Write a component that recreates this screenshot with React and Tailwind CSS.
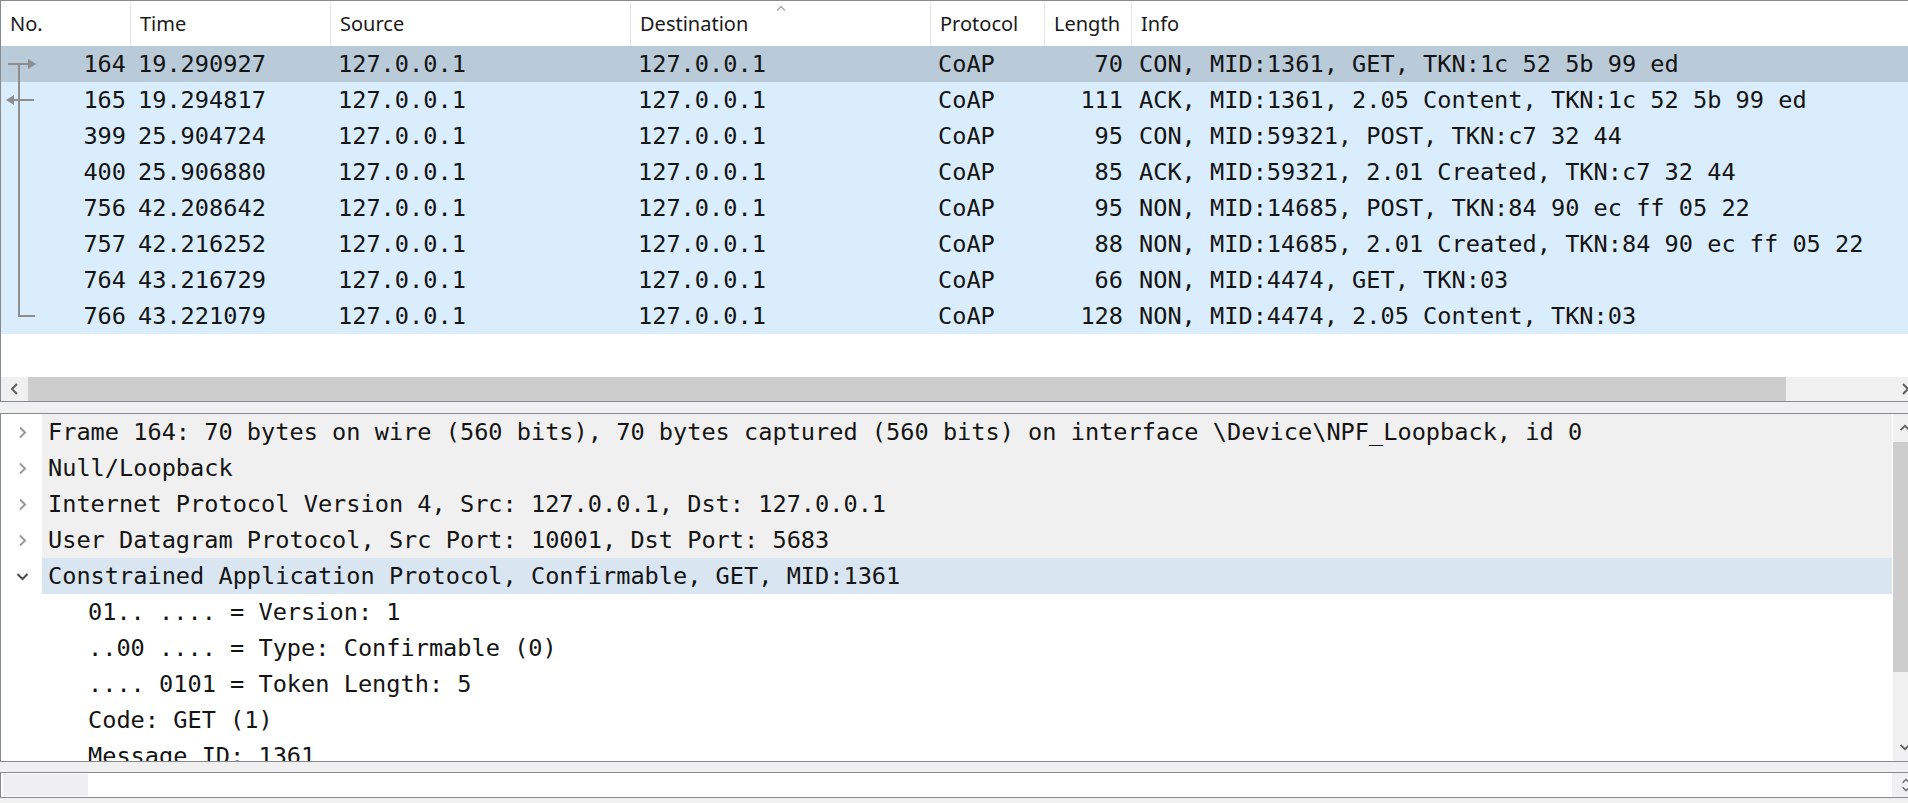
import React from 'react';

const packets = [
  { no: 164, time: '19.290927', src: '127.0.0.1', dst: '127.0.0.1', proto: 'CoAP', len: 70, info: 'CON, MID:1361, GET, TKN:1c 52 5b 99 ed' },
  { no: 165, time: '19.294817', src: '127.0.0.1', dst: '127.0.0.1', proto: 'CoAP', len: 111, info: 'ACK, MID:1361, 2.05 Content, TKN:1c 52 5b 99 ed' },
  { no: 399, time: '25.904724', src: '127.0.0.1', dst: '127.0.0.1', proto: 'CoAP', len: 95, info: 'CON, MID:59321, POST, TKN:c7 32 44' },
  { no: 400, time: '25.906880', src: '127.0.0.1', dst: '127.0.0.1', proto: 'CoAP', len: 85, info: 'ACK, MID:59321, 2.01 Created, TKN:c7 32 44' },
  { no: 756, time: '42.208642', src: '127.0.0.1', dst: '127.0.0.1', proto: 'CoAP', len: 95, info: 'NON, MID:14685, POST, TKN:84 90 ec ff 05 22' },
  { no: 757, time: '42.216252', src: '127.0.0.1', dst: '127.0.0.1', proto: 'CoAP', len: 88, info: 'NON, MID:14685, 2.01 Created, TKN:84 90 ec ff 05 22' },
  { no: 764, time: '43.216729', src: '127.0.0.1', dst: '127.0.0.1', proto: 'CoAP', len: 66, info: 'NON, MID:4474, GET, TKN:03' },
  { no: 766, time: '43.221079', src: '127.0.0.1', dst: '127.0.0.1', proto: 'CoAP', len: 128, info: 'NON, MID:4474, 2.05 Content, TKN:03' },
];

const tree = [
  { text: 'Frame 164: 70 bytes on wire (560 bits), 70 bytes captured (560 bits) on interface \\Device\\NPF_Loopback, id 0', kind: 'closed' },
  { text: 'Null/Loopback', kind: 'closed' },
  { text: 'Internet Protocol Version 4, Src: 127.0.0.1, Dst: 127.0.0.1', kind: 'closed' },
  { text: 'User Datagram Protocol, Src Port: 10001, Dst Port: 5683', kind: 'closed' },
  { text: 'Constrained Application Protocol, Confirmable, GET, MID:1361', kind: 'open' },
  { text: '01.. .... = Version: 1', kind: 'child' },
  { text: '..00 .... = Type: Confirmable (0)', kind: 'child' },
  { text: '.... 0101 = Token Length: 5', kind: 'child' },
  { text: 'Code: GET (1)', kind: 'child' },
  { text: 'Message ID: 1361', kind: 'child' },
];

const mono = "font-['DejaVu_Sans_Mono',monospace] text-[23.6px] text-[#141414]";

const Chevron = ({ dir, className }) => {
  const d = {
    left: 'M7 1 L2 6 L7 11',
    right: 'M2 1 L7 6 L2 11',
    up: 'M1 7 L6 2 L11 7',
    down: 'M1 2 L6 7 L11 2',
  }[dir];
  const box = dir === 'left' || dir === 'right' ? '0 0 9 12' : '0 0 12 9';
  return (
    <svg viewBox={box} className={className} fill="none" stroke="currentColor" strokeWidth="2">
      <path d={d} />
    </svg>
  );
};

const HeaderCell = ({ w, children, extra }) => (
  <div className={`${w} relative h-full flex items-center pl-[9px] border-r border-[#e5e5e5] shrink-0`}>
    {children}
    {extra}
  </div>
);

const RelationLines = () => (
  <svg className="absolute left-0 top-0 w-[40px] h-[288px] pointer-events-none" viewBox="0 0 40 288" fill="none" stroke="#8e8e8e" strokeWidth="2">
    <path d="M18 18 V271 M18 270 H34" />
    <path d="M7 18 H28" />
    <path d="M27 13 L35 18 L27 23 Z" fill="#8e8e8e" stroke="none" />
    <path d="M12 54 H33" />
    <path d="M13 49 L5 54 L13 59 Z" fill="#8e8e8e" stroke="none" />
  </svg>
);

export default function App() {
  return (
    <div className="w-[1908px] h-[803px] bg-[#f0f0f0] overflow-hidden flex flex-col">
      {/* packet list */}
      <div className="h-[402px] border border-r-0 border-[#868a91] bg-white flex flex-col shrink-0">
        <div className="h-[45px] flex font-['Noto_Sans',sans-serif] text-[20px] text-[#1a1a1a] bg-white shrink-0 pt-[1px]">
          <HeaderCell w="w-[130px]">No.</HeaderCell>
          <HeaderCell w="w-[200px]">Time</HeaderCell>
          <HeaderCell w="w-[300px]">Source</HeaderCell>
          <HeaderCell
            w="w-[300px]"
            extra={<Chevron dir="up" className="absolute left-[145px] top-[3px] w-[10px] h-[7px] text-[#a8a8a8]" />}
          >
            Destination
          </HeaderCell>
          <HeaderCell w="w-[114px]">Protocol</HeaderCell>
          <HeaderCell w="w-[87px]">Length</HeaderCell>
          <div className="flex-1 h-full flex items-center pl-[9px]">Info</div>
        </div>
        <div className="relative">
          {packets.map((p, i) => (
            <div
              key={p.no}
              className={`h-[36px] flex leading-[36px] whitespace-nowrap ${mono} ${i === 0 ? 'bg-[#b9cad9]' : 'bg-[#daedfd]'}`}
            >
              <div className="w-[130px] shrink-0 text-right pr-[5px]">{p.no}</div>
              <div className="w-[200px] shrink-0 pl-[7px]">{p.time}</div>
              <div className="w-[300px] shrink-0 pl-[7px]">{p.src}</div>
              <div className="w-[300px] shrink-0 pl-[7px]">{p.dst}</div>
              <div className="w-[114px] shrink-0 pl-[7px]">{p.proto}</div>
              <div className="w-[87px] shrink-0 text-right pr-[9px]">{p.len}</div>
              <div className="flex-1 pl-[7px]">{p.info}</div>
            </div>
          ))}
          <RelationLines />
        </div>
        <div className="flex-1" />
        <div className="h-[24px] flex bg-[#f0f0f0] shrink-0">
          <div className="w-[27px] flex items-center justify-center">
            <Chevron dir="left" className="w-[9px] h-[12px] text-[#606060]" />
          </div>
          <div className="w-[1758px] bg-[#cdcdcd]" />
          <div className="flex-1" />
          <div className="w-[16px] flex items-center justify-end">
            <Chevron dir="right" className="w-[9px] h-[12px] text-[#606060] translate-x-[2px]" />
          </div>
        </div>
      </div>

      <div className="h-[11px] shrink-0" />

      {/* packet details */}
      <div className="h-[349px] border border-r-0 border-[#868a91] bg-white flex shrink-0">
        <div className="flex-1 overflow-hidden">
          {tree.map((t, i) => (
            <div key={i} className={`h-[36px] flex leading-[36px] whitespace-nowrap ${mono}`}>
              <div className="w-[41px] shrink-0 flex items-center justify-center pl-[2px]">
                {t.kind === 'closed' && <Chevron dir="right" className="w-[9px] h-[13px] text-[#9a9a9a]" />}
                {t.kind === 'open' && <Chevron dir="down" className="w-[13px] h-[9px] text-[#4a4a4a]" />}
              </div>
              <div
                className={`flex-1 ${
                  t.kind === 'closed' ? 'bg-[#f0f0f0] pl-[6px]' : t.kind === 'open' ? 'bg-[#d9e6f2] pl-[6px]' : 'pl-[46px]'
                }`}
              >
                {t.text}
              </div>
            </div>
          ))}
        </div>
        <div className="w-[16px] shrink-0 bg-[#f0f0f0] border-l border-white flex flex-col">
          <div className="h-[28px] flex items-center justify-end">
            <Chevron dir="up" className="w-[12px] h-[8px] text-[#606060] translate-x-[3px]" />
          </div>
          <div className="h-[230px] bg-[#cdcdcd]" />
          <div className="flex-1" />
          <div className="h-[28px] flex items-center justify-end">
            <Chevron dir="down" className="w-[12px] h-[8px] text-[#606060] translate-x-[3px]" />
          </div>
        </div>
      </div>

      <div className="h-[10px] shrink-0" />

      {/* packet bytes */}
      <div className="h-[26px] border border-r-0 border-[#868a91] bg-white flex shrink-0">
        <div className="flex-1 pl-[2px] py-[1px]">
          <div className="w-[85px] h-full bg-[#efefef]" />
        </div>
        <div className="w-[16px] shrink-0 bg-[#f0f0f0] flex flex-col items-end justify-center gap-[2px]">
          <Chevron dir="up" className="w-[10px] h-[6px] text-[#606060] translate-x-[3px]" />
          <Chevron dir="down" className="w-[10px] h-[6px] text-[#606060] translate-x-[3px]" />
        </div>
      </div>
    </div>
  );
}
